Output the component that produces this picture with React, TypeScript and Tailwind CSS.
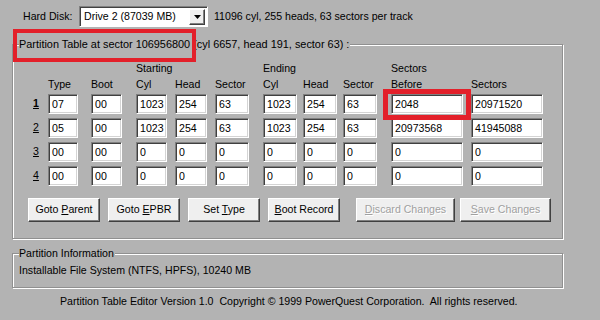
const widths = [
  'w-[30px]',
  'w-[31px]',
  'w-[31px]',
  'w-[32px]',
  'w-[34px]',
  'w-[34px]',
  'w-[34px]',
  'w-[34px]',
  'w-[72px]',
  'w-[72px]',
];

const rows = [
  ['07', '00', '1023', '254', '63', '1023', '254', '63', '2048', '20971520'],
  ['05', '00', '1023', '254', '63', '1023', '254', '63', '20973568', '41945088'],
  ['00', '00', '0', '0', '0', '0', '0', '0', '0', '0'],
  ['00', '00', '0', '0', '0', '0', '0', '0', '0', '0'],
];

const gridCols = 'grid grid-cols-[15px_43px_45px_39px_40px_48px_40px_40px_48px_80px_72px]';

function Field({ value, width }: { value: string; width: string }) {
  return (
    <div
      className={`${width} h-[20px] bg-white border border-t-[#808080] border-l-[#808080] border-b-white border-r-white shadow-[inset_1px_1px_0_#404040,inset_-1px_-1px_0_#d4d4d4] pl-[3px] flex items-center leading-none`}
    >
      {value}
    </div>
  );
}

function Button({ children, width, disabled }: { children: React.ReactNode; width: string; disabled?: boolean }) {
  return (
    <div
      className={`${width} h-[24px] bg-[#efefef] border border-t-white border-l-white border-b-[#404040] border-r-[#404040] shadow-[inset_-1px_-1px_0_#808080] flex items-center justify-center ${
        disabled ? 'text-[#a0a0a0] [text-shadow:1px_1px_0_#ffffff]' : 'text-black'
      }`}
    >
      <span className="whitespace-pre">{children}</span>
    </div>
  );
}

function GroupBox({
  label,
  className,
  labelClass = '',
  children,
}: {
  label: string;
  className: string;
  labelClass?: string;
  children: React.ReactNode;
}) {
  return (
    <div className={`relative ml-[12px] w-[551px] border border-[#909090] shadow-[inset_1px_1px_0_#ffffff,1px_1px_0_#ffffff] ${className}`}>
      <span className={`absolute -top-[8px] left-[6px] bg-[#b3b3b3] pr-[1px] leading-[14px] whitespace-nowrap ${labelClass}`}>
        {label}
      </span>
      {children}
    </div>
  );
}

export default function App() {
  return (
    <div className="relative w-[600px] h-[320px] bg-[#b3b3b3] text-black text-[10.6px] font-['Liberation_Sans',Arial,sans-serif] overflow-hidden">
      {/* Disk selector */}
      <div className="flex items-center pt-[6px] pl-[23px] h-[27px] whitespace-nowrap">
        <span className="w-[48px] shrink-0">Hard Disk:</span>
        <div className="ml-[8px] shrink-0 w-[129px] h-[21px] bg-white border border-t-[#808080] border-l-[#808080] border-b-white border-r-white shadow-[inset_1px_1px_0_#404040] flex items-center justify-between pl-[4px] pr-[2px]">
          <span>Drive 2 (87039 MB)</span>
          <div className="w-[16px] h-[16px] bg-[#efefef] border border-t-white border-l-white border-b-[#404040] border-r-[#404040] shadow-[inset_-1px_-1px_0_#808080] flex items-center justify-center">
            <svg width="7" height="4" viewBox="0 0 7 4">
              <path d="M0 0h7L3.5 4z" fill="#000" />
            </svg>
          </div>
        </div>
        <span className="ml-[6px]">11096 cyl, 255 heads, 63 sectors per track</span>
      </div>

      {/* Partition table */}
      <GroupBox
        label="Partition Table at sector 106956800 (cyl 6657, head 191, sector 63) :"
        labelClass="text-[10.9px]"
        className="mt-[17px] h-[195px] pt-[16px] pl-[20px]"
      >
        <div className={`${gridCols} h-[16px] items-center`}>
          <span />
          <span />
          <span />
          <span>Starting</span>
          <span />
          <span />
          <span>Ending</span>
          <span />
          <span />
          <span>Sectors</span>
          <span />
        </div>
        <div className={`${gridCols} h-[16px] items-center mb-[1px]`}>
          <span />
          <span>Type</span>
          <span>Boot</span>
          <span>Cyl</span>
          <span>Head</span>
          <span>Sector</span>
          <span>Cyl</span>
          <span>Head</span>
          <span>Sector</span>
          <span>Before</span>
          <span>Sectors</span>
        </div>
        <div className="flex flex-col gap-[4px]">
          {rows.map((row, i) => (
            <div key={i} className={`${gridCols} items-center`}>
              <span className={`underline ${i === 0 ? 'font-bold' : ''}`}>{i + 1}</span>
              {row.map((v, j) => (
                <Field key={j} value={v} width={widths[j]} />
              ))}
            </div>
          ))}
        </div>
        <div className="flex mt-[12px] -ml-[5px]">
          <Button width="w-[72px]">
            Goto <u>P</u>arent
          </Button>
          <div className="ml-[8px]">
            <Button width="w-[72px]">
              Goto <u>E</u>PBR
            </Button>
          </div>
          <div className="ml-[8px]">
            <Button width="w-[72px]">
              Set <u>T</u>ype
            </Button>
          </div>
          <div className="ml-[8px]">
            <Button width="w-[72px]">
              <u>B</u>oot Record
            </Button>
          </div>
          <div className="ml-[16px]">
            <Button width="w-[99px]" disabled>
              <u>D</u>iscard Changes
            </Button>
          </div>
          <div className="ml-[5px]">
            <Button width="w-[91px]" disabled>
              <u>S</u>ave Changes
            </Button>
          </div>
        </div>
      </GroupBox>

      {/* Partition information */}
      <GroupBox label="Partition Information" className="mt-[14px] h-[35px] pt-[9px] pl-[6px]">
        <span>Installable File System (NTFS, HPFS), 10240 MB</span>
      </GroupBox>

      <div className="pl-[60px] mt-[6px] whitespace-nowrap">
        Partition Table Editor Version 1.0&nbsp; Copyright © 1999 PowerQuest Corporation.&nbsp; All rights reserved.
      </div>

      {/* Highlight boxes */}
      <div className="absolute left-[13px] top-[29px] w-[183px] h-[33px] border-4 border-[#e3202a]" />
      <div className="absolute left-[383px] top-[89px] w-[88px] h-[31px] border-[5px] border-[#e3202a]" />
    </div>
  );
}
